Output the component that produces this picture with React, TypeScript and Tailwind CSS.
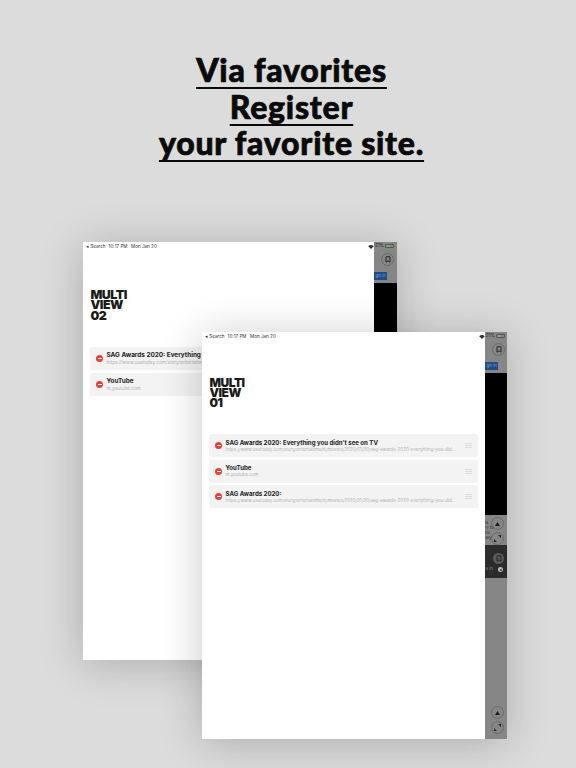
import React from 'react';

interface Favorite {
  title: string;
  url: string;
}

const URL_LONG = 'https://www.usatoday.com/story/entertainment/movies/2020/01/20/sag-awards-2020-everything-you-did...';

const frontItems: Favorite[] = [
  { title: "SAG Awards 2020: Everything you didn't see on TV", url: URL_LONG },
  { title: 'YouTube', url: 'm.youtube.com' },
  { title: 'SAG Awards 2020:', url: URL_LONG },
];

const backItems: Favorite[] = [
  { title: "SAG Awards 2020: Everything you didn't see on TV", url: URL_LONG },
  { title: 'YouTube', url: 'm.youtube.com' },
];

function RoundButton({ children }: { children: React.ReactNode }) {
  return (
    <div className="w-[13px] h-[13px] rounded-full border border-[#6a6a6a] flex items-center justify-center">
      {children}
    </div>
  );
}

function BookmarkGlyph() {
  return (
    <svg width="6" height="7" viewBox="0 0 6 7" fill="none" stroke="#262626" strokeWidth="1">
      <path d="M1 .8h4v5.4L3 4.9 1 6.2z" />
    </svg>
  );
}

function UpGlyph() {
  return (
    <svg width="5" height="4" viewBox="0 0 5 4" fill="#1c1c1c">
      <path d="M2.5 0 5 4H0z" />
    </svg>
  );
}

function ExpandGlyph() {
  return (
    <svg width="7" height="7" viewBox="0 0 7 7" fill="#262626">
      <path d="M4 0h3v3zM3 7H0V4z" />
    </svg>
  );
}

function StatusBar() {
  return (
    <div className="h-[9px] pt-[1px] flex items-center text-[4.6px] leading-none text-[#333] pl-[3px]">
      <span className="mr-[3px]">◂ Search</span>
      <span className="mr-[3.5px]">10:17 PM</span>
      <span>Mon Jan 20</span>
    </div>
  );
}

function FavoriteRow({ item, large }: { item: Favorite; large: boolean }) {
  return (
    <div className="h-[23px] shrink-0 bg-[#f3f3f3] rounded-[2px] flex items-center pl-[6px] pr-[6px]">
      <div className="w-[7px] h-[7px] rounded-full bg-[#ee4035] flex items-center justify-center shrink-0 mr-[3.5px]">
        <div className="w-[4px] h-px bg-white" />
      </div>
      <div className="flex-1 min-w-0">
        <div className={`leading-[8px] font-bold text-[#222] whitespace-nowrap ${large ? 'text-[6.4px]' : 'text-[6.1px]'}`}>
          {item.title}
        </div>
        <div className={`leading-[6px] text-[#b2b2b2] whitespace-nowrap ${large ? 'text-[4.7px]' : 'text-[4.5px]'}`}>
          {item.url}
        </div>
      </div>
      <div className="w-[7px] shrink-0 ml-[3px] flex flex-col gap-px">
        <div className="h-px bg-[#dcdcdc]" />
        <div className="h-px bg-[#dcdcdc]" />
        <div className="h-px bg-[#dcdcdc]" />
      </div>
    </div>
  );
}

function SidePanelTop() {
  return (
    <div className="relative h-[41px] bg-[#868686] shrink-0">
      <div className="absolute left-[1px] top-[2px] flex items-center gap-px text-[4.5px] leading-none text-[#222] whitespace-nowrap">
        <span>21%</span>
        <div className="w-[9px] h-[4px] border border-[#555] rounded-[1px] flex items-center pl-[1px]">
          <div className="w-[3px] h-[2px] bg-[#5cc65c]" />
        </div>
      </div>
      <div className="absolute left-[7px] top-[11px]">
        <RoundButton>
          <BookmarkGlyph />
        </RoundButton>
      </div>
      <div className="absolute left-0 top-[30px] w-[13px] h-[8px] bg-[#1f4e86] text-[4.5px] leading-[8px] text-[#7fa0c8] text-right pr-px whitespace-nowrap overflow-hidden">
        gn in
      </div>
    </div>
  );
}

function Wifi() {
  return (
    <svg width="6" height="4" viewBox="0 0 7 5" fill="#333" className="absolute right-[0.5px] top-[2.5px]">
      <path d="M0 1.6C2-.4 5-.4 7 1.6L3.5 5z" />
    </svg>
  );
}

function Screen({ label, items, children, className, panelWidth, large }: {
  label: string;
  items: Favorite[];
  children: React.ReactNode;
  className: string;
  panelWidth: string;
  large: boolean;
}) {
  return (
    <div className={`absolute flex overflow-hidden shadow-[0_4px_40px_rgba(0,0,0,0.22)] ${className}`}>
      <div className={`relative bg-white flex flex-col overflow-hidden shrink-0 ${panelWidth}`}>
        <StatusBar />
        <Wifi />
        <div className={`pl-[7.5px] font-black text-[#1a1a1a] tracking-[-0.5px] ${large ? 'mt-[39px] text-[12.4px] leading-[10.3px]' : 'mt-[37px] text-[12px] leading-[10px]'}`}>
          <div>MULTI</div>
          <div>VIEW</div>
          <div>{label}</div>
        </div>
        <div className={`px-[7px] flex flex-col ${large ? 'mt-[26px] gap-[3px]' : 'mt-[26px] gap-[2.5px]'}`}>
          {items.map((item) => (
            <FavoriteRow key={item.url + item.title} item={item} large={large} />
          ))}
        </div>
      </div>
      <div className="flex-1 flex flex-col">{children}</div>
    </div>
  );
}

export default function App() {
  return (
    <div className="relative w-[576px] h-[768px] overflow-hidden bg-[#dcdcdc] font-['Inter','Liberation_Sans',sans-serif]">
      <h1 className="pt-[52px] pl-[7px] text-center text-[32px] leading-[36.5px] font-black tracking-[0.75px] text-[#0a0a0a] [-webkit-text-stroke:0.7px_#0a0a0a] font-['Lato','Liberation_Sans',sans-serif]">
        <span className="underline decoration-2 underline-offset-[4.5px] [text-decoration-skip-ink:none]">Via favorites</span>
        <br />
        <span className="underline decoration-2 underline-offset-[4.5px] [text-decoration-skip-ink:none]">Register</span>
        <br />
        <span className="underline decoration-2 underline-offset-[4.5px] [text-decoration-skip-ink:none]">your favorite site.</span>
      </h1>

      {/* back window */}
      <Screen label="02" items={backItems} large className="left-[83px] top-[242px] w-[314px] h-[418px]" panelWidth="w-[291px]">
        <SidePanelTop />
        <div className="flex-1 bg-black" />
      </Screen>

      {/* front window */}
      <Screen label="01" items={frontItems} large={false} className="left-[202px] top-[332px] w-[305px] h-[407px]" panelWidth="w-[283px]">
        <SidePanelTop />
        <div className="h-[142px] bg-black shrink-0" />
        <div className="relative h-[30px] bg-[#868686] shrink-0 flex flex-col items-end pr-[3px] pt-[2px]">
          <div className="absolute left-0 top-[5px] text-[4px] leading-[5px] text-[#333]">
            <div>ia</div>
            <div>ry to</div>
            <div>nd</div>
            <div>laly</div>
          </div>
          <RoundButton>
            <UpGlyph />
          </RoundButton>
          <div className="mt-[2px]">
            <RoundButton>
              <ExpandGlyph />
            </RoundButton>
          </div>
        </div>
        <div className="relative h-[33px] bg-[#2c2c2c] shrink-0 flex flex-col items-end pr-[3px] pt-[8px]">
          <div className="w-[11px] h-[11px] rounded-full bg-[#5a5a5a] flex items-center justify-center">
            <BookmarkGlyph />
          </div>
          <div className="mt-[3px] mr-[1px] flex items-center gap-[5px] text-[4.5px] leading-none text-[#8a8a8a]">
            <span>s in</span>
            <div className="w-[5px] h-[5px] rounded-full bg-[#bdbdbd] flex items-center justify-center">
              <div className="w-[2px] h-[2px] rounded-full bg-[#2c2c2c]" />
            </div>
          </div>
        </div>
        <div className="flex-1 bg-[#868686] flex flex-col items-end justify-end pr-[3px] pb-[5px] gap-[2px]">
          <RoundButton>
            <UpGlyph />
          </RoundButton>
          <RoundButton>
            <ExpandGlyph />
          </RoundButton>
        </div>
      </Screen>
    </div>
  );
}
